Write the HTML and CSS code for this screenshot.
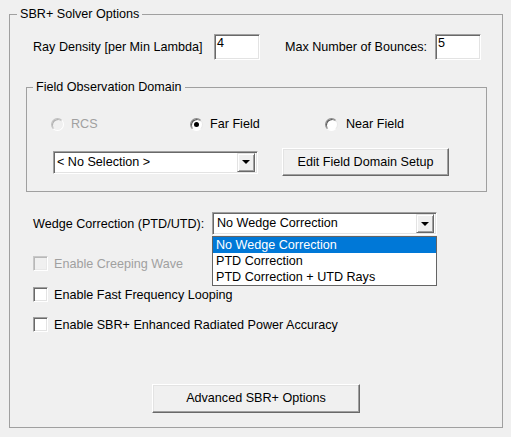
FILE: index.html
```html
<!DOCTYPE html>
<html>
<head>
<meta charset="utf-8">
<link rel="stylesheet" href="styles.css">
</head>
<body>
<fieldset class="group outer">
  <legend class="legend">SBR+ Solver Options</legend>
  <div class="row r1">
    <div class="pair p1"><span class="lbl">Ray Density [per Min Lambda]</span><div class="edit">4</div></div>
    <div class="pair p2"><span class="lbl">Max Number of Bounces:</span><div class="edit">5</div></div>
  </div>

  <fieldset class="group inner">
    <legend class="legend">Field Observation Domain</legend>
    <div class="radios">
      <div class="radio disabled rcs"><span class="circle"></span><span>RCS</span></div>
      <div class="radio far"><span class="circle checked"></span><span>Far Field</span></div>
      <div class="radio near"><span class="circle"></span><span>Near Field</span></div>
    </div>
    <div class="row r2">
      <div class="combo c1"><span class="val">&lt; No Selection &gt;</span><span class="arrow"><span class="tri"></span></span></div>
      <div class="btn b1">Edit Field Domain Setup</div>
    </div>
  </fieldset>

  <div class="row wedge">
    <span class="lbl wlbl">Wedge Correction (PTD/UTD):</span>
    <div class="combo c2">
      <span class="val">No Wedge Correction</span><span class="arrow"><span class="tri"></span></span>
      <ul class="list">
        <li class="sel">No Wedge Correction</li>
        <li>PTD Correction</li>
        <li>PTD Correction + UTD Rays</li>
      </ul>
    </div>
  </div>

  <div class="check disabled creep"><span class="box"></span><span>Enable Creeping Wave</span></div>
  <div class="check fast"><span class="box"></span><span>Enable Fast Frequency Looping</span></div>
  <div class="check sbr"><span class="box"></span><span>Enable SBR+ Enhanced Radiated Power Accuracy</span></div>

  <div class="actions"><div class="btn b2">Advanced SBR+ Options</div></div>
</fieldset>
</body>
</html>
```

FILE: styles.css
```css
* { box-sizing: border-box; }
html, body { margin: 0; background: #f0f0f0; }
body {
  padding: 6px 0 0 9px;
  font-family: "Liberation Sans", Arial, sans-serif;
  font-size: 12.6px;
  color: #000;
  width: 511px;
  height: 437px;
  overflow: hidden;
}
.group {
  margin: 0;
  padding: 0;
  border: 1px solid #a0a0a0;
  min-width: 0;
}
.legend {
  padding: 0 3px;
  line-height: 16px;
  height: 16px;
}
.outer { width: 494px; padding-bottom: 14px; }
.outer > .legend { margin-left: 7px; }

.row { display: flex; align-items: center; }
.r1 { margin: 12px 0 0 23px; width: 448px; justify-content: space-between; height: 26px; }
.pair { display: flex; align-items: center; }
.p1 { width: 227px; justify-content: space-between; }
.p2 { gap: 8px; }

.edit {
  width: 46px;
  height: 26px;
  background: #fff;
  border: 1px solid;
  border-color: #a0a0a0 #fff #fff #a0a0a0;
  box-shadow: inset 1px 1px 0 #696969, inset -1px -1px 0 #e3e3e3;
  padding: 1px 0 0 2px;
  line-height: 15px;
}

.inner { margin: 19px 0 0 16px; width: 461px; padding-bottom: 15px; }
.inner > .legend { margin-left: 6px; }

.radios { display: flex; margin: 21px 0 0 24px; height: 16px; align-items: center; }
.radio { display: flex; align-items: center; gap: 7px; }
.rcs { width: 139px; }
.far { width: 135px; }
.near { gap: 8px; }
.circle {
  width: 13px; height: 13px;
  border-radius: 50%;
  background: #fff;
  border: 1px solid;
  border-color: #8a8a8a #e8e8e8 #fff #8a8a8a;
  box-shadow: inset 1px 1px 0 #5a5a5a;
  display: flex; align-items: center; justify-content: center;
}
.circle.checked::after {
  content: "";
  width: 5px; height: 5px;
  border-radius: 50%;
  background: #000;
}
.disabled { color: #a0a0a0; }
.disabled .circle { background: #f0f0f0; border-color: #c0c0c0 #fff #fff #c0c0c0; box-shadow: inset 1px 1px 0 #b0b0b0; }

.r2 { margin: 16px 0 0 26px; height: 28px; }

.combo {
  position: relative;
  height: 23px;
  background: #fff;
  border: 1px solid;
  border-color: #a0a0a0 #fff #fff #a0a0a0;
  box-shadow: inset 1px 1px 0 #696969, inset -1px -1px 0 #e3e3e3;
  display: flex;
  align-items: center;
  padding: 1px 2px 2px 1px;
}
.combo .val { flex: 1; padding-left: 2px; line-height: 18px; }
.c1 { width: 205px; }
.c2 { width: 225px; }
.c2 .val { padding-left: 3px; }
.arrow {
  width: 18px;
  height: 19px;
  margin-top: 1px;
  background: #f0f0f0;
  border: 1px solid;
  border-color: #e3e3e3 #696969 #696969 #e3e3e3;
  box-shadow: inset 1px 1px 0 #fff, inset -1px -1px 0 #a0a0a0;
  display: flex; align-items: center; justify-content: center;
}
.tri {
  width: 0; height: 0;
  border-left: 4px solid transparent;
  border-right: 4px solid transparent;
  border-top: 4px solid #000;
}

.btn {
  display: flex; align-items: center; justify-content: center;
  background: #f0f0f0;
  border: 1px solid;
  border-color: #fff #696969 #696969 #fff;
  box-shadow: inset -1px -1px 0 #a0a0a0, inset 1px 1px 0 #e3e3e3;
  padding-bottom: 1px;
}
.b1 { width: 167px; height: 28px; margin-left: 24px; }
.b2 { width: 208px; height: 29px; }

.wedge { margin: 20px 0 0 23px; height: 23px; }
.wlbl { width: 179px; }
.list {
  position: absolute;
  left: -1px;
  top: 23px;
  width: 225px;
  margin: 0;
  padding: 0;
  list-style: none;
  background: #fff;
  border: 1px solid #646464;
  z-index: 2;
}
.list li { height: 16px; line-height: 16px; padding-left: 3px; }
.list li.sel { background: #0078d7; color: #fff; }

.check { display: flex; align-items: center; gap: 6px; margin-left: 23px; height: 15px; }
.box {
  width: 15px; height: 15px;
  background: #fff;
  border: 1px solid;
  border-color: #a0a0a0 #fff #fff #a0a0a0;
  box-shadow: inset 1px 1px 0 #696969, inset -1px -1px 0 #e3e3e3;
}
.check.disabled .box { background: #f0f0f0; box-shadow: inset 1px 1px 0 #b8b8b8, inset -1px -1px 0 #e8e8e8; border-color: #c8c8c8 #fff #fff #c8c8c8; }
.creep { margin-top: 21px; }
.fast { margin-top: 16px; }
.sbr { margin-top: 15px; }

.actions { display: flex; justify-content: center; margin-top: 52px; }
```
